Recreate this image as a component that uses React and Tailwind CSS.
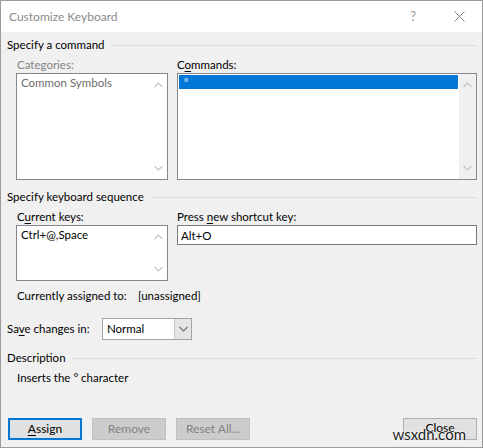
import { useState } from "react";

const ui = { fontFamily: '"Segoe UI", Lato, "Liberation Sans", sans-serif' };

// group header: label followed by a hairline that runs to the right edge
function GroupHeader({ children }) {
  return (
    <div className="flex h-4 items-center">
      <span className="leading-4">{children}</span>
      <div className="ml-[6px] h-px flex-1 bg-[#dcdcdc]" />
    </div>
  );
}

function Chevron({ up, color = "#c2c2c2" }) {
  return (
    <svg width="9" height="6" viewBox="0 0 9 6" className="block">
      <path
        d={up ? "M0.5 5 L4.5 1 L8.5 5" : "M0.5 1 L4.5 5 L8.5 1"}
        fill="none"
        stroke={color}
        strokeWidth="1.1"
      />
    </svg>
  );
}

// list box with a (disabled looking) vertical scroll column
function ListBox({ className, scrollBg = "bg-white", children }) {
  return (
    <div className={`flex border border-[#828790] bg-white ${className}`}>
      <div className="min-w-0 flex-1 p-px">{children}</div>
      <div className={`flex w-[17px] flex-col items-center justify-between py-[8px] ${scrollBg}`}>
        <Chevron up />
        <Chevron />
      </div>
    </div>
  );
}

function Button({ children, disabled, primary, className = "" }) {
  return (
    <button
      type="button"
      className={`flex h-[22px] w-[74px] items-center justify-center text-[12px] ${
        primary
          ? "border-2 border-[#0078d7] bg-[#e1e1e1] text-black"
          : disabled
          ? "border border-[#bfbfbf] bg-[#cccccc] text-[#838383]"
          : "border border-[#adadad] bg-[#e1e1e1] text-black"
      } ${className}`}
    >
      {children}
    </button>
  );
}

export default function App() {
  const [shortcut, setShortcut] = useState("Alt+O");

  return (
    <div
      style={ui}
      className="flex h-[448px] w-[483px] flex-col border border-[#9b9b9b] bg-[#f0f0f0] text-[11.5px] text-black"
    >
      {/* Title bar */}
      <div className="flex h-[31px] shrink-0 items-center bg-white pl-[8px] pr-[17px]">
        <span className="flex-1 text-[12px] text-[#8a8a8a]">Customize Keyboard</span>
        <span className="mr-[38px] text-[13px] text-[#9a9a9a]">?</span>
        <svg width="11" height="11" viewBox="0 0 11 11">
          <path d="M0.5 0.5 L10.5 10.5 M10.5 0.5 L0.5 10.5" stroke="#8a8a8a" strokeWidth="1" />
        </svg>
      </div>

      {/* Dialog body */}
      <div className="flex flex-1 flex-col pl-[6px] pr-[5px] pb-[7px]">
        <div className="mt-[5px]">
          <GroupHeader>Specify a command</GroupHeader>
        </div>

        <div className="ml-[9px] mt-[4px] flex gap-[9px]">
          <div className="flex w-[152px] flex-col">
            <div className="h-4 pl-px leading-4 text-[#838383]">Categories:</div>
            <ListBox className="h-[107px]">
              <div className="px-[3px] leading-[16px] text-[#6d6d6d]">Common Symbols</div>
            </ListBox>
          </div>
          <div className="flex flex-1 flex-col">
            <div className="h-4 leading-4">
              C<span className="underline underline-offset-2">o</span>mmands:
            </div>
            <ListBox className="h-[107px]" scrollBg="bg-[#f0f0f0]">
              <div className="flex h-[14px] items-center bg-[#0078d7] px-[5px] text-[10px] leading-none text-white">
                °
              </div>
            </ListBox>
          </div>
        </div>

        <div className="mt-[9px]">
          <GroupHeader>Specify keyboard sequence</GroupHeader>
        </div>

        <div className="ml-[9px] mt-[4px] flex gap-[9px]">
          <div className="flex w-[152px] flex-col">
            <div className="h-4 pl-px leading-4">
              C<span className="underline underline-offset-2">u</span>rrent keys:
            </div>
            <ListBox className="h-[56px]">
              <div className="px-[3px] leading-[16px]">Ctrl+@,Space</div>
            </ListBox>
          </div>
          <div className="flex flex-1 flex-col">
            <div className="h-4 leading-4">
              Press <span className="underline underline-offset-2">n</span>ew shortcut key:
            </div>
            <input
              value={shortcut}
              onChange={(e) => setShortcut(e.target.value)}
              className="h-[20px] border border-[#7a7a7a] bg-white px-[3px] text-[11.5px] outline-none"
              style={ui}
            />
          </div>
        </div>

        <div className="ml-[10px] mt-[7px] flex h-4 items-center whitespace-nowrap leading-4">
          <span className="w-[121px]">Currently assigned to:</span>
          <span>[unassigned]</span>
        </div>

        <div className="mt-[14px] flex items-center whitespace-nowrap">
          <span className="w-[95px]">
            Sa<span className="underline underline-offset-2">v</span>e changes in:
          </span>
          <div className="flex h-[22px] w-[90px] border border-[#a3a3a3] bg-white">
            <span className="flex-1 pl-[4px] leading-[20px]">Normal</span>
            <div className="flex w-[17px] items-center justify-center border-l border-[#c8c8c8] bg-[#e5e5e5]">
              <Chevron color="#707070" />
            </div>
          </div>
        </div>

        <div className="mt-[10px]">
          <GroupHeader>Description</GroupHeader>
        </div>
        <div className="ml-[10px] mt-[4px] h-4 leading-4">Inserts the ° character</div>

        {/* Action buttons */}
        <div className="relative mt-auto flex items-center gap-[10px] pl-px">
          <Button primary>
            <span className="underline underline-offset-2">A</span>ssign
          </Button>
          <Button disabled>Remove</Button>
          <Button disabled>Reset All...</Button>
          <Button className="ml-auto pb-[3px]">Close</Button>
          <span className="absolute right-[11px] top-[9px] text-[15px] leading-none text-[#1e1e1e] [text-shadow:0_0_2px_#fff,0_0_2px_#fff]">
            wsxdn.com
          </span>
        </div>
      </div>
    </div>
  );
}
